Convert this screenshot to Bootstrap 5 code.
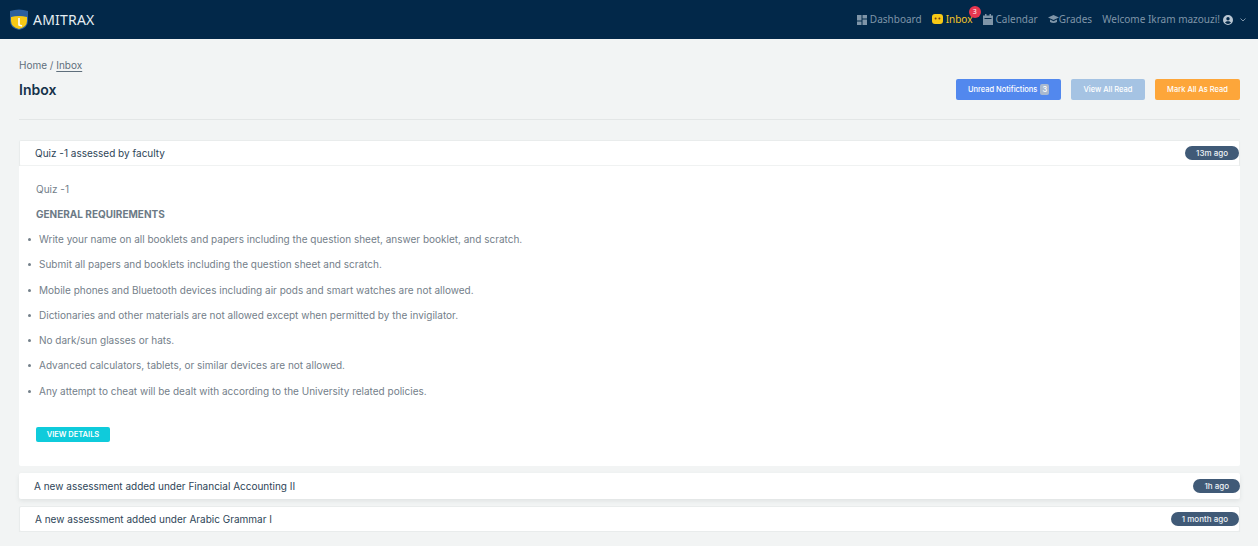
<!DOCTYPE html>
<html lang="en">

<head>
    <meta charset="UTF-8">
    <meta name="viewport" content="width=device-width, initial-scale=1.0">
    <title>Inbox - Amitrax</title>
    <link href="https://cdn.jsdelivr.net/npm/bootstrap@5.3.3/dist/css/bootstrap.min.css" rel="stylesheet">
    <style>
        body {
            background-color: #f2f4f4;
            font-family: "Inter", "Noto Sans", sans-serif;
            color: #74808a;
            font-size: 10px;
            overflow: hidden;
        }

        .top-bar {
            background-color: #022849;
            height: 39px;
            padding: 0 12px 0 9px;
        }

        .brand-name {
            color: #e4edf2;
            font-size: 14px;
            font-family: "Noto Sans", sans-serif;
            letter-spacing: .2px;
        }

        .top-link {
            color: #7f95a8;
            font-size: 10px;
            font-family: "Noto Sans", sans-serif;
            text-decoration: none;
            position: relative;
            display: flex;
            align-items: center;
            gap: 3px;
        }

        .top-link.is-active {
            color: #f5c528;
        }

        .count-dot {
            position: absolute;
            top: -6px;
            left: 37px;
            width: 12px;
            height: 12px;
            border-radius: 50%;
            background: #e8364f;
            color: #fff;
            font-size: 7px;
            line-height: 12px;
            text-align: center;
        }

        .page-area {
            padding: 0 18px 0 19px;
        }

        .crumbs {
            padding-top: 20px;
            font-size: 10px;
            color: #5f6f7c;
            line-height: 13px;
        }

        .crumbs u {
            text-underline-offset: 2px;
        }

        .page-head {
            margin-top: 7px;
            padding-bottom: 11px;
            border-bottom: 1px solid #e3e6e6;
            height: 41px;
        }

        .page-title {
            color: #16324a;
            font-size: 14px;
            font-weight: 600;
            margin: 0;
            line-height: 18px;
            padding-top: 2px;
        }

        .act-btn {
            font-size: 7.5px;
            font-weight: 500;
            color: #fff;
            border: 0;
            border-radius: 2px;
            height: 21px;
            display: flex;
            align-items: center;
            justify-content: center;
            gap: 3px;
            padding: 0;
        }

        .act-unread {
            background: #5288ee;
            width: 105px;
        }

        .act-read {
            background: #a5c3e3;
            width: 74px;
        }

        .act-mark {
            background: #fda63a;
            width: 85px;
        }

        .btn-count {
            background: #a9b9cf;
            border-radius: 2px;
            padding: 1px 2px;
            font-size: 7.5px;
            line-height: 9px;
        }

        .msg-row {
            background: #fff;
            border-radius: 2px;
            height: 26px;
            padding: 0 0 0 15px;
            color: #2e4558;
            font-size: 10px;
            box-shadow: 0 1px 1px #e6e9e9;
        }

        .msg-first {
            margin-top: 20px;
            border: 1px solid #e9ecec;
            border-bottom: 1px solid #f0f2f2;
        }

        .msg-open {
            margin-top: 7px;
            box-shadow: 0 2px 4px #dfe3e3;
        }

        .msg-last {
            margin-top: 7px;
            border: 1px solid #e9ecec;
        }

        .time-pill {
            background: #405a77;
            color: #eef2f6;
            font-size: 8px;
            font-weight: 500;
            border-radius: 8px;
            height: 14px;
            line-height: 14px;
            padding: 0 11px;
        }

        .msg-body {
            background: #fff;
            height: 300px;
            padding: 17px 17px 0 17px;
            border-radius: 0 0 2px 2px;
        }

        .msg-body p {
            margin: 0;
            line-height: 13px;
        }

        .req-title {
            margin-top: 12px !important;
            font-weight: 700;
            color: #6c7a86;
        }

        .req-list {
            list-style: none;
            margin: 12px 0 0;
            padding: 0;
        }

        .req-list li {
            line-height: 13px;
            margin-bottom: 12.3px;
            padding-left: 3px;
            position: relative;
        }

        .req-list li::before {
            content: "";
            position: absolute;
            left: -8px;
            top: 5px;
            width: 3px;
            height: 3px;
            border-radius: 50%;
            background: #74808a;
        }

        .details-btn {
            display: block;
            margin-top: 29px;
            background: #0fcbdb;
            color: #fff;
            border: 0;
            border-radius: 2px;
            font-size: 7.5px;
            font-weight: 600;
            width: 74px;
            height: 15px;
            padding: 0;
            line-height: 15px;
        }
    </style>
</head>

<body>
    <!-- Navigation Bar -->
    <nav class="top-bar d-flex align-items-center justify-content-between">
        <div class="d-flex align-items-center gap-1">
            <svg width="20" height="22" viewBox="0 0 20 22">
                <path d="M1 2 Q10 -1 19 2 L19 12 Q19 19 10 21 Q1 19 1 12 Z" fill="#2c5f9e" />
                <path d="M2 8 Q10 6 18 8 L18 12 Q18 18 10 20 Q2 18 2 12 Z" fill="#f7c916" />
                <path d="M10 9 L10 16 L13 17" fill="none" stroke="#fff" stroke-width="1.6" />
            </svg>
            <span class="brand-name">AMITRAX</span>
        </div>
        <div class="d-flex align-items-center" style="gap: 10px">
            <a class="top-link" href="#">
                <svg width="10" height="10" viewBox="0 0 10 10" fill="#7f95a8">
                    <rect width="4.5" height="5.5" />
                    <rect x="5.5" width="4.5" height="3.5" />
                    <rect y="6.5" width="4.5" height="3.5" />
                    <rect x="5.5" y="4.5" width="4.5" height="5.5" />
                </svg>
                Dashboard
            </a>
            <a class="top-link is-active" href="#">
                <svg width="11" height="11" viewBox="0 0 11 11">
                    <rect width="11" height="10" rx="3" fill="#f7c916" />
                    <circle cx="3.6" cy="4.5" r="1" fill="#7a3a10" />
                    <circle cx="7.4" cy="4.5" r="1" fill="#7a3a10" />
                </svg>
                Inbox
                <span class="count-dot">3</span>
            </a>
            <a class="top-link" href="#">
                <svg width="10" height="11" viewBox="0 0 10 11" fill="#7f95a8">
                    <path d="M2 0h1.5v1.5h3V0H8v1.5h2V11H0V1.5h2z" />
                    <rect x="1.5" y="4" width="7" height="1" fill="#022849" />
                </svg>
                Calendar
            </a>
            <a class="top-link" href="#" style="gap: 0">
                <svg width="11" height="9" viewBox="0 0 11 9" fill="#7f95a8">
                    <path d="M5.5 0 11 2.5 5.5 5 0 2.5z" />
                    <path d="M2 4.6 5.5 6.2 9 4.6V7Q5.5 9 2 7z" />
                </svg>
                Grades
            </a>
            <div class="top-link">
                Welcome Ikram mazouzi!
                <svg width="10" height="10" viewBox="0 0 10 10" fill="#b9c6d2">
                    <path d="M5 0a5 5 0 1 0 0 10A5 5 0 0 0 5 0zm0 2a1.7 1.7 0 1 1 0 3.4A1.7 1.7 0 0 1 5 2zm0 7a3.8 3.8 0 0 1-3-1.4C2.500 6.600 3.800 6.200 5 6.200s2.500.4 3 1.400A3.800 3.800 0 0 1 5 9z" />
                </svg>
                <svg class="ms-1" width="6" height="4" viewBox="0 0 6 4" fill="none" stroke="#7f95a8">
                    <path d="M.5.5 3 3 5.500.5" />
                </svg>
            </div>
        </div>
    </nav>

    <div class="page-area">
        <div class="crumbs">Home / <u>Inbox</u></div>
        <div class="page-head d-flex justify-content-between align-items-start">
            <h1 class="page-title">Inbox</h1>
            <div class="d-flex" style="gap: 10px">
                <button class="act-btn act-unread">Unread Notifictions <span class="btn-count">3</span></button>
                <button class="act-btn act-read">View All Read</button>
                <button class="act-btn act-mark">Mark All As Read</button>
            </div>
        </div>

        <!-- Messages -->
        <div class="msg-row msg-first d-flex align-items-center justify-content-between">
            <span>Quiz -1 assessed by faculty</span>
            <span class="time-pill">13m ago</span>
        </div>
        <div class="msg-body">
            <p>Quiz -1</p>
            <p class="req-title">GENERAL REQUIREMENTS</p>
            <ul class="req-list">
                <li>Write your name on all booklets and papers including the question sheet, answer booklet, and scratch.</li>
                <li>Submit all papers and booklets including the question sheet and scratch.</li>
                <li>Mobile phones and Bluetooth devices including air pods and smart watches are not allowed.</li>
                <li>Dictionaries and other materials are not allowed except when permitted by the invigilator.</li>
                <li>No dark/sun glasses or hats.</li>
                <li>Advanced calculators, tablets, or similar devices are not allowed.</li>
                <li>Any attempt to cheat will be dealt with according to the University related policies.</li>
            </ul>
            <button class="details-btn">VIEW DETAILS</button>
        </div>
        <div class="msg-row msg-open d-flex align-items-center justify-content-between">
            <span>A new assessment added under Financial Accounting II</span>
            <span class="time-pill">1h ago</span>
        </div>
        <div class="msg-row msg-last d-flex align-items-center justify-content-between">
            <span>A new assessment added under Arabic Grammar I</span>
            <span class="time-pill">1 month ago</span>
        </div>
    </div>

    <script src="https://cdn.jsdelivr.net/npm/bootstrap@5.3.3/dist/js/bootstrap.bundle.min.js"></script>
</body>

</html>
